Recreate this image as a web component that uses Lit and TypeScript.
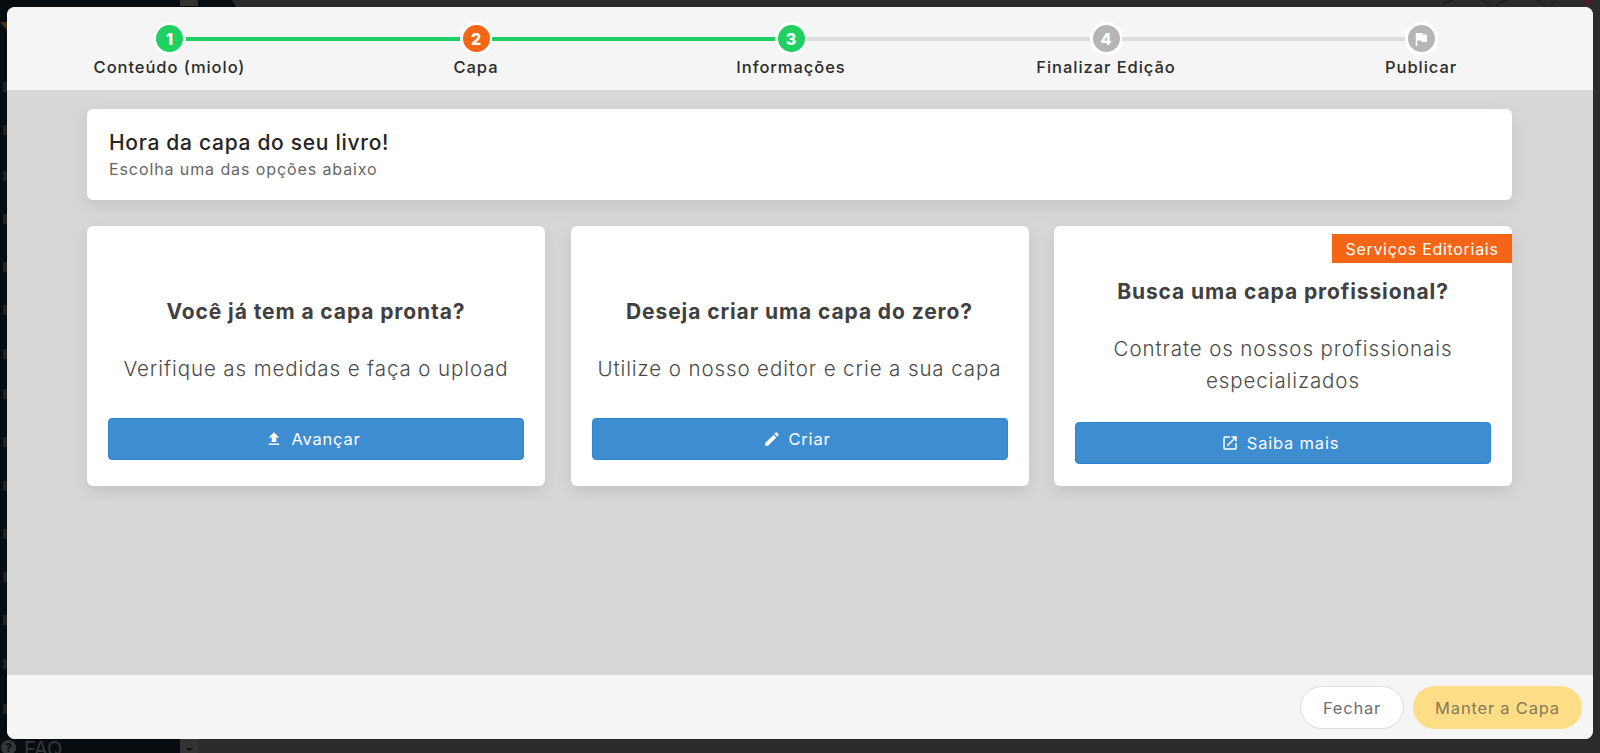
import { LitElement, html, css, svg } from 'lit';
import { customElement } from 'lit/decorators.js';

const flagIcon = svg`<path d="M14.4 6 14 4H5v17h2v-7h5.6l.4 2h7V6z" fill="#fff"/>`;
const uploadIcon = svg`<path d="M9 16h6v-6h4l-7-7-7 7h4zm-4 2h14v2H5z" fill="#fff"/>`;
const pencilIcon = svg`<path d="M3 17.25V21h3.75L17.81 9.94l-3.75-3.75L3 17.25zM20.71 7.04c.39-.39.39-1.02 0-1.41l-2.34-2.34c-.39-.39-1.02-.39-1.41 0l-1.83 1.83 3.75 3.75 1.83-1.83z" fill="#fff"/>`;
const openIcon = svg`<path d="M19 19H5V5h7V3H5c-1.11 0-2 .9-2 2v14c0 1.1.89 2 2 2h14c1.1 0 2-.9 2-2v-7h-2v7zM14 3v2h3.59l-9.83 9.83 1.41 1.41L19 6.41V10h2V3h-7z" fill="#fff"/>`;

type Step = { label: string; mark: string; state: string; line: string };

const steps: Step[] = [
   { label: 'Conteúdo (miolo)', mark: '1', state: 'done', line: 'on' },
   { label: 'Capa', mark: '2', state: 'current', line: 'on' },
   { label: 'Informações', mark: '3', state: 'done', line: 'off' },
   { label: 'Finalizar Edição', mark: '4', state: 'todo', line: 'off' },
   { label: 'Publicar', mark: '', state: 'todo', line: '' },
];

// the dimmed page behind the modal, only its edges show
const edgeMarks = [82, 125, 171, 214, 262, 305, 349, 389, 437, 481, 529, 572, 615, 659, 704];

@customElement('app-root')
export class AppRoot extends LitElement {
   static styles = css`
   :host {
      display: block;
      height: 753px;
      overflow: hidden;
      position: relative;
      background: #2b2b2b;
      font-family: 'Inter', 'Open Sans', sans-serif;
   }
   .backdrop {
      position: absolute;
      left: 0;
      top: 0;
      width: 1600px;
      height: 753px;
   }
   .faq-icon {
      position: absolute;
      left: 1px;
      top: 740px;
      width: 15px;
      height: 15px;
      border-radius: 50%;
      background: #33373a;
      color: #070c10;
      font-size: 12px;
      font-weight: 700;
      line-height: 15px;
      text-align: center;
   }
   .faq {
      position: absolute;
      left: 24px;
      top: 736px;
      font-size: 20px;
      line-height: 26px;
      color: #33373a;
   }
   .modal {
      position: absolute;
      left: 7px;
      top: 7px;
      width: 1586px;
      height: 732px;
      display: flex;
      flex-direction: column;
      border-radius: 8px;
      overflow: hidden;
      background: #d7d7d7;
   }
   .header {
      height: 83px;
      flex: none;
      box-sizing: border-box;
      padding: 15px 13px 0 13.5px;
      background: #f5f5f5;
      display: grid;
      grid-template-columns: 298px repeat(4, 315px);
   }
   .step {
      position: relative;
      display: flex;
      flex-direction: column;
      align-items: center;
   }
   .line {
      position: absolute;
      top: 15px;
      left: calc(50% + 16px);
      height: 4px;
      width: 283px;
      background: #dcdcdc;
   }
   .step:first-child .line {
      width: 274px;
   }
   .line.on {
      background: #1fd160;
   }
   .dot {
      width: 33px;
      height: 33px;
      box-sizing: border-box;
      border: 3px solid #fff;
      border-radius: 50%;
      display: flex;
      align-items: center;
      justify-content: center;
      color: #fff;
      font-size: 16px;
      font-weight: 800;
      background: #b5b5b5;
   }
   .dot.done {
      background: #1fd160;
   }
   .dot.current {
      background: #f56516;
   }
   .dot svg {
      width: 18px;
      height: 18px;
   }
   .label {
      margin-top: 1px;
      font-size: 16.5px;
      line-height: 22px;
      font-weight: 500;
      letter-spacing: 0.95px;
      color: #2b2b2b;
      white-space: nowrap;
   }
   .body {
      flex: 1;
      box-sizing: border-box;
      padding: 19px 81px 0 80px;
      display: flex;
      flex-direction: column;
      gap: 26px;
   }
   .panel {
      background: #fff;
      border-radius: 6px;
      box-shadow: 0 6px 16px rgba(0, 0, 0, 0.09);
   }
   .intro {
      height: 91px;
      box-sizing: border-box;
      padding: 21px 22px 0;
   }
   .intro h1 {
      margin: 0;
      font-size: 21px;
      line-height: 26px;
      font-weight: 500;
      letter-spacing: 0.7px;
      color: #252525;
   }
   .intro p {
      margin: 3px 0 0;
      font-size: 16px;
      line-height: 20px;
      font-weight: 400;
      letter-spacing: 0.9px;
      color: #666;
   }
   .cards {
      display: grid;
      grid-template-columns: repeat(3, 1fr);
      gap: 25.5px;
   }
   .card {
      position: relative;
      height: 260px;
      box-sizing: border-box;
      padding: 0 21px 26px;
      display: flex;
      flex-direction: column;
      justify-content: flex-end;
      text-align: center;
   }
   .card.tall {
      padding-bottom: 22px;
   }
   .badge {
      position: absolute;
      top: 8px;
      right: 0;
      width: 180px;
      height: 29px;
      display: flex;
      align-items: center;
      justify-content: center;
      background: #f56516;
      color: #fff;
      font-size: 16px;
      font-weight: 400;
      letter-spacing: 0.7px;
   }
   .card h2 {
      margin: 0 0 27px;
      font-size: 21px;
      line-height: 28px;
      font-weight: 700;
      letter-spacing: 0.9px;
      color: #404040;
   }
   .card p {
      margin: 0 0 33px;
      font-size: 20.5px;
      line-height: 32px;
      font-weight: 300;
      letter-spacing: 0.9px;
      color: #4a4a4a;
   }
   .card.tall p {
      margin-bottom: 25px;
   }
   .action {
      height: 42px;
      box-sizing: border-box;
      border: 1px solid #2f86d0;
      border-radius: 4px;
      background: #3f8dd1;
      color: #fff;
      font: inherit;
      font-size: 16.5px;
      font-weight: 400;
      letter-spacing: 0.8px;
      display: flex;
      align-items: center;
      justify-content: center;
      gap: 8px;
      padding: 0 6px 0 0;
   }
   .action svg {
      width: 18px;
      height: 18px;
   }
   .footer {
      height: 64px;
      flex: none;
      box-sizing: border-box;
      padding: 11px 11px 0 0;
      background: #f5f5f5;
      display: flex;
      justify-content: flex-end;
      gap: 9px;
   }
   .pill {
      height: 43px;
      box-sizing: border-box;
      border-radius: 22px;
      font: inherit;
      font-size: 16.5px;
      letter-spacing: 0.8px;
      padding: 0;
   }
   .pill.close {
      width: 104px;
      border: 1.5px solid #dbdbdb;
      background: #fff;
      color: #6e6e6e;
   }
   .pill.keep {
      width: 169px;
      border: none;
      background: #fedd87;
      color: #857a58;
   }
   `;

   renderStep(step: Step) {
      return html`
         <div class="step">
            ${step.line ? html`<div class="line ${step.line}"></div>` : ''}
            <div class="dot ${step.state}">
               ${step.mark || html`<svg viewBox="0 0 24 24">${flagIcon}</svg>`}
            </div>
            <div class="label">${step.label}</div>
         </div>
      `;
   }

   render() {
      return html`
         <svg class="backdrop" viewBox="0 0 1600 753">
            <path d="M0 0H232L236 7H198V753H0z" fill="#070c10"/>
            <rect x="180" y="0" width="18" height="6" fill="#333"/>
            <rect x="180" y="738" width="18" height="15" fill="#333"/>
            <path d="M186 748h7l-3.5 3z" fill="#111"/>
            <path d="M0 22l7 8v-8z" fill="#4a3018"/>
            ${edgeMarks.map((y) => svg`<rect x="3" y=${y} width="4" height="10" fill="#1e2225"/>`)}
            <path d="M1442 6q9-7 14-7M1480 -1q6 2 10 7M1496 6q9-7 14-7M1535 -1q6 2 10 7M1550 6q6-6 8-7" stroke="#151515" fill="none"/>
            <circle cx="1587" cy="-1" r="6" fill="#4a1a28"/>
         </svg>
         <div class="faq-icon">?</div>
         <div class="faq">FAQ</div>
         <div class="modal">
            <div class="header">${steps.map((s) => this.renderStep(s))}</div>
            <div class="body">
               <div class="panel intro">
                  <h1>Hora da capa do seu livro!</h1>
                  <p>Escolha uma das opções abaixo</p>
               </div>
               <div class="cards">
                  <div class="panel card">
                     <h2>Você já tem a capa pronta?</h2>
                     <p>Verifique as medidas e faça o upload</p>
                     <button class="action"><svg viewBox="0 0 24 24">${uploadIcon}</svg>Avançar</button>
                  </div>
                  <div class="panel card">
                     <h2>Deseja criar uma capa do zero?</h2>
                     <p>Utilize o nosso editor e crie a sua capa</p>
                     <button class="action"><svg viewBox="0 0 24 24">${pencilIcon}</svg>Criar</button>
                  </div>
                  <div class="panel card tall">
                     <div class="badge">Serviços Editoriais</div>
                     <h2>Busca uma capa profissional?</h2>
                     <p>Contrate os nossos profissionais especializados</p>
                     <button class="action"><svg viewBox="0 0 24 24">${openIcon}</svg>Saiba mais</button>
                  </div>
               </div>
            </div>
            <div class="footer">
               <button class="pill close">Fechar</button>
               <button class="pill keep">Manter a Capa</button>
            </div>
         </div>
      `;
   }
}
